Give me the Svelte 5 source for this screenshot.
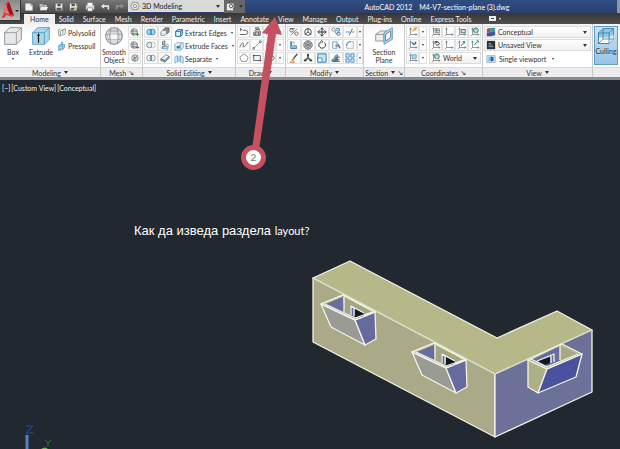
<script lang="ts">
	type Shape = { d: string; fill?: string; stroke?: string; w?: number };

	const dark = '#4c5358';
	const blue = '#2f80b5';
	const sky = '#a9d8f0';

	let workspace = $state('3D Modeling');
	let activeTab = $state('Home');
	let visualStyle = $state('Conceptual');
	let view = $state('Unsaved View');
	let ucs = $state('World');

	const tabs = [
		'Home', 'Solid', 'Surface', 'Mesh', 'Render', 'Parametric', 'Insert', 'Annotate',
		'View', 'Manage', 'Output', 'Plug-ins', 'Online', 'Express Tools'
	];

	const axes: Shape = { d: 'M3 2V9H10M3 9L1 11M2 3L3 1L4 3M9 8L11 9L9 10', stroke: dark };

	// every icon is drawn on a 12 x 12 grid
	const icons: Record<string, Shape[]> = {
		new: [{ d: 'M2 2H8L10 4V10H2Z', fill: '#f4f4f4', stroke: '#ddd' }, { d: 'M8 2V4H10', stroke: '#777' }],
		open: [{ d: 'M1 3H4L5 4H9V9H2Z', fill: '#aaa', stroke: '#ddd' }, { d: 'M3 6H11L9 10H1Z', fill: '#f0f0f0' }],
		save: [{ d: 'M2 2H10V10H2Z', fill: '#eee' }, { d: 'M4 2H8V5H4ZM3 7H9V10H3Z', fill: '#555' }],
		saveAs: [{ d: 'M1 2H9V10H1Z', fill: '#eee' }, { d: 'M3 2H7V5H3ZM2 7H7V10H2Z', fill: '#555' }, { d: 'M6 10L10 5', stroke: '#d8c56c', w: 2 }],
		print: [{ d: 'M3 1H9V5H3Z', fill: '#fff' }, { d: 'M1 4H11V9H1Z', fill: '#ddd' }, { d: 'M3 7H9V11H3Z', fill: '#fff', stroke: '#666' }],
		undo: [{ d: 'M5 2L1 5L5 8V6H9V9H11V4H5Z', fill: '#e3e3e3' }],
		redo: [{ d: 'M7 2L11 5L7 8V6H3V9H1V4H7Z', fill: '#8d8d8d' }],
		search: [{ d: 'M1 2H9V10H1Z', fill: '#eee' }, { d: 'M4 5A2 2 0 1 0 8 5A2 2 0 1 0 4 5M8 7L11 10', stroke: '#444', w: 1 }],
		gear: [{ d: 'M6 1L7 2L9 2L10 4L11 6L10 8L9 10L7 10L6 11L5 10L3 10L2 8L1 6L2 4L3 2L5 2Z', stroke: '#555', fill: '#eee' }, { d: 'M4 6A2 2 0 1 0 8 6A2 2 0 1 0 4 6', stroke: '#555' }],
		box: [{ d: 'M1 4L4 1H11V8L8 11H1Z', fill: '#e6e8ea', stroke: '#7a8085', w: 0.5 }, { d: 'M1 4H8V11M8 4L11 1', stroke: '#8b9095', w: 0.5 }],
		extrude: [{ d: 'M1 4L4 1H11V8L8 11H1Z', fill: '#a9d8ee', stroke: '#4a94b8', w: 0.5 }, { d: 'M1 4H8V11M8 4L11 1', stroke: '#4a94b8', w: 0.5 }, { d: 'M4.500 10V5M4 6L4.500 5L5 6', stroke: '#222', w: 0.8 }],
		polysolid: [{ d: 'M2 2V9L4 10V4L7 2V8L5 9M7 2L10 1V6L8 9M2 2L4 1', stroke: dark }],
		presspull: [{ d: 'M2 6L4 4H9V8L7 10H2Z', fill: sky, stroke: blue }, { d: 'M2 6H7V10M6 5V1M5 3L6 1L7 3', stroke: blue }, { d: 'M1 11H5', stroke: dark }],
		smooth: [{ d: 'M1 6A5 5 0 1 0 11 6A5 5 0 1 0 1 6', fill: '#dadde0', stroke: '#70767b', w: 0.5 }, { d: 'M1 5H11M2 8H10M4 1Q3 6 4 11M8 1Q9 6 8 11M3 3H9', stroke: '#8d9399', w: 0.5 }, { d: 'M4 5H8V8H4Z', fill: '#f4f5f7' }],
		meshMore: [{ d: 'M1 6A4 4 0 1 0 9 6A4 4 0 1 0 1 6', fill: '#e2e4e6', stroke: dark }, { d: 'M1 5H9M4 2Q3 6 4 10M2 8H8', stroke: dark }, { d: 'M7 9H11M9 7V11', stroke: '#3a9b35', w: 1.4 }],
		meshLess: [{ d: 'M1 6A4 4 0 1 0 9 6A4 4 0 1 0 1 6', fill: '#e2e4e6', stroke: dark }, { d: 'M1 5H9M4 2Q3 6 4 10M2 8H8', stroke: dark }, { d: 'M7 9H11', stroke: '#c43838', w: 1.8 }],
		refine: [{ d: 'M2 6A4 4 0 1 0 10 6A4 4 0 1 0 2 6', fill: '#e2e4e6', stroke: dark }, { d: 'M3 9L9 3M5 3V6H9M4 7H6V10', stroke: dark }],
		union: [{ d: 'M1 6A3 3.5 0 1 0 7 6A3 3.5 0 1 0 1 6M5 6A3 3.5 0 1 0 11 6A3 3.5 0 1 0 5 6', fill: sky, stroke: blue, w: 1 }],
		subtract: [{ d: 'M5 6A3 3.5 0 1 0 11 6A3 3.5 0 1 0 5 6', stroke: '#92999e' }, { d: 'M1 6A3 3.5 0 1 0 7 6A3 3.5 0 1 0 1 6', fill: '#d8edf7', stroke: dark }],
		intersect: [{ d: 'M1 6A3 3.5 0 1 0 7 6A3 3.5 0 1 0 1 6M5 6A3 3.5 0 1 0 11 6A3 3.5 0 1 0 5 6', stroke: dark }, { d: 'M6 3Q4 6 6 9Q8 6 6 3Z', fill: sky, stroke: blue }],
		interfere: [{ d: 'M4 3L6 1H11V6L9 8H4Z', fill: '#858c91', stroke: dark }, { d: 'M1 6L3 4H8V8L6 10H1Z', fill: '#e9ebec', stroke: dark }],
		slice: [{ d: 'M3 2L6 1V5L3 6Z', fill: '#bbb', stroke: dark }, { d: 'M2 10L4 7L10 8L9 11Z', fill: sky, stroke: blue }, { d: 'M2 9L9 5L11 7', stroke: dark }],
		thicken: [{ d: 'M1 7L7 2L11 4L6 9Z', fill: '#f2f2f2', stroke: dark }, { d: 'M1 7V9L6 11L11 6V4L6 9Z', fill: '#7db3d2', stroke: dark }],
		edges: [{ d: 'M2 4L4 2H10V8L8 10H2Z', fill: '#e7f4fb', stroke: '#1d6da3', w: 1.2 }, { d: 'M2 4H8V10M8 4L10 2', stroke: '#1d6da3', w: 1.2 }],
		faces: [{ d: 'M1 4L4 2H11V8L8 11H1Z', fill: '#edf5f9', stroke: '#38769c' }, { d: 'M3 6H7V9H3Z', fill: '#2e80ad' }, { d: 'M8 4V10M5 7L9 3', stroke: '#38769c' }],
		separate: [{ d: 'M1 4L4 2V9L1 11ZM11 4L8 2V9L11 11ZM5 2V10M7 2V10', fill: '#e4f3fa', stroke: blue }],
		pline: [{ d: 'M1 9H8A2.5 2.5 0 0 0 8 4H5M2 3H4M2 1V5', stroke: dark, w: 1 }],
		loft: [{ d: 'M3 5L5 3H8L10 5V10H2V6M4 10V6H8V10M5 3L4 1H8L9 3', fill: '#c9ccce', stroke: dark, w: 1 }],
		arc: [{ d: 'M2 10Q2 2 10 2', stroke: dark }],
		spline: [{ d: 'M1 9C4 0 6 4 5 7S8 8 11 2', stroke: dark, w: 1 }],
		line: [{ d: 'M2 10L10 2M1 9H3V11H1ZM9 1H11V3H9Z', stroke: dark }],
		circle: [{ d: 'M2 6A4 4 0 1 0 10 6A4 4 0 1 0 2 6', stroke: dark, w: 1 }],
		polygon: [{ d: 'M6 1L11 5L9 10H3L1 5Z', stroke: dark }],
		rect: [{ d: 'M2 3H10V9H2Z', fill: '#f5f5f5', stroke: dark, w: 1 }, { d: 'M1 2H3V4H1ZM9 8H11V10H9Z', fill: dark }],
		ellipse: [{ d: 'M1 6A5 3 0 1 0 11 6A5 3 0 1 0 1 6', stroke: dark, w: 1 }],
		mirror: [{ d: 'M2 10L10 2', stroke: blue, w: 1 }, { d: 'M1 4A2 2 0 1 0 5 4A2 2 0 1 0 1 4M7 8A2 2 0 1 0 11 8A2 2 0 1 0 7 8M1 2H7', stroke: dark, w: 1 }],
		align: [{ d: 'M3 2V7H9Q10 10 8 10H2V2Z', fill: sky, stroke: blue, w: 1 }, { d: 'M4 2L6 3V5M2 10H10', stroke: dark }],
		erase: [{ d: 'M5 7L10 1', stroke: '#4b3c32', w: 1.6 }, { d: 'M2 9L5 6L7 8L5 10Z', fill: '#e0a13c' }, { d: 'M1 11H7', stroke: '#b33c2d', w: 1 }],
		gizmo: [{ d: 'M2 6A4 4 0 1 0 10 6A4 4 0 1 0 2 6M6 6V1M6 6L2 9M6 6L10 9', stroke: '#34393d', w: 1 }],
		gizmoRotate: [{ d: 'M1 6A5 5 0 1 0 11 6A5 5 0 1 0 1 6', stroke: dark, w: 1, fill: '#ddd' }, { d: 'M3 6A3 3 0 1 0 9 6A3 3 0 1 0 3 6M6 1V11M2 4L10 8M10 4L2 8', stroke: dark }],
		gizmoScale: [{ d: 'M6 6V2', stroke: '#2e70b5', w: 2 }, { d: 'M6 6L2 9', stroke: '#b54336', w: 2 }, { d: 'M6 6L10 9', stroke: '#3b8b42', w: 2 }, { d: 'M5 1H7V4H5ZM1 8H4V10H1ZM8 8H11V10H8Z', fill: '#333' }],
		move: [{ d: 'M6 1V11M1 6H11M4 3L6 1L8 3M4 9L6 11L8 9M3 4L1 6L3 8M9 4L11 6L9 8', stroke: '#2e3438', w: 1.2 }],
		rotate: [{ d: 'M9 3A4 4 0 1 1 5 2M5 0L7 2L5 4', stroke: '#34393d', w: 1.2 }],
		scale: [{ d: 'M1 1H11V11H1Z', fill: '#c5e4f4', stroke: '#3183b8', w: 1.2 }, { d: 'M1 6H6V11H1Z', fill: '#fff', stroke: '#3183b8', w: 1 }],
		copy: [{ d: 'M1 3A2 2 0 1 0 5 3A2 2 0 1 0 1 3M5 6A2 2 0 1 0 9 6A2 2 0 1 0 5 6', stroke: dark }, { d: 'M7 8A2 2 0 1 0 11 8A2 2 0 1 0 7 8M6 2H10V5', stroke: blue, w: 1.2 }],
		stretch: [{ d: 'M2 2H7V10H2Z', fill: '#edf6fb', stroke: blue }, { d: 'M5 7H10V10M8 4L11 10', stroke: dark, w: 1 }],
		offset: [{ d: 'M1 10V8Q4 8 4 5Q5 2 8 2V10Z', fill: '#70a9cb', stroke: dark }, { d: 'M5 10V7Q7 7 7 5H11M6 8H10M2 10H11', stroke: dark, w: 1 }],
		trim: [{ d: 'M1 6H6M8 6H11', stroke: blue, w: 1 }, { d: 'M5 10L9 2', stroke: dark, w: 1 }],
		fillet: [{ d: 'M2 10V6Q2 2 7 2H10V10Z', fill: '#fafafa', stroke: '#8b9196' }, { d: 'M2 7Q2 2 7 2', stroke: blue, w: 1 }],
		array: [{ d: 'M1 1H5V5H1ZM7 1H11V5H7ZM1 7H5V11H1ZM7 7H11V11H7Z', fill: '#d4eaf6', stroke: '#3688b9', w: 1 }],
		section: [{ d: 'M1 5L4 3H9L6 5V9H1Z', fill: '#ececec', stroke: '#888', w: 0.5 }, { d: 'M1 5H6', stroke: '#888', w: 0.5 }, { d: 'M6 4L11 1V8L6 11Z', fill: '#b7d9ec', stroke: '#4a94bd', w: 0.5 }, { d: 'M7 5L10 3V7L7 9Z', fill: '#fff', stroke: '#667', w: 0.5 }],
		ucsNew: [axes, { d: 'M5 5L9 2M7 2L10 1L9 4', stroke: '#e2a52d', w: 1.4 }],
		ucsGrid: [axes, { d: 'M5 2H10V7H5ZM5 4H10M7 2V7', fill: '#eee', stroke: dark }],
		ucs: [axes],
		ucsView: [axes, { d: 'M5 3H10V7H5Z', fill: '#ddd', stroke: dark, w: 1 }],
		ucsGlobe: [axes, { d: 'M4 4A3 3 0 1 0 10 4A3 3 0 1 0 4 4', fill: '#8fc7bd', stroke: '#33806b', w: 1 }, { d: 'M5 3L7 5L9 3M7 5V7', stroke: '#fff' }],
		ucsX: [axes, { d: 'M5 3L8 6M9 2V5', stroke: '#2b6292', w: 1.6 }],
		ucsBack: [axes, { d: 'M6 6Q10 7 10 4Q9 1 6 3M5 5V2H8', stroke: '#222', w: 1 }],
		ucsZ: [axes, { d: 'M5 7L9 2M7 2H9V4', stroke: '#2869a8', w: 1.2 }],
		ucsPoints: [axes, { d: 'M5 6L9 2M8 1H10V3', stroke: '#29816e', w: 1.2 }],
		ucsFace: [axes, { d: 'M5 2H10V6L8 7H5Z', fill: sky, stroke: blue }],
		conceptual: [{ d: 'M1 2L5 1V6L1 7Z', fill: '#bd4750' }, { d: 'M5 1H11V6H5Z', fill: '#369b9c' }, { d: 'M1 7L6 6V11H1Z', fill: '#3f5091' }, { d: 'M6 6H11V10L6 11Z', fill: '#335fae' }],
		unsaved: [{ d: 'M1 1H11V11H1Z', fill: '#263038' }, { d: 'M3 4H6M3 6H8M3 8H9', stroke: '#dfe6e9' }],
		viewport: [{ d: 'M1 2H11V10H1Z', fill: '#d9eaf6', stroke: '#6d8ba2' }, { d: 'M3 4L6 3V8L3 9Z', fill: '#6bb4df' }, { d: 'M6 3L9 4V8L6 9Z', fill: '#1e61a0' }],
		culling: [{ d: 'M1 4L4 1H11V8L8 11H1Z', fill: '#8fc6e8', stroke: '#397596', w: 0.5 }, { d: 'M1 7H8V11H1Z', fill: '#fff' }, { d: 'M8 7L11 5V8L8 11Z', fill: '#e2eef6' }, { d: 'M1 4H8V11M8 4L11 1M1 4V11H8M4 1V8L1 11M4 8H11', stroke: '#397596', w: 0.5 }]
	};

	const quickTools = ['new', 'open', 'save', 'saveAs', 'print', 'undo', 'redo'];
	const meshTools = ['meshMore', 'meshLess', 'refine'];
	const solidTools = ['union', 'interfere', 'subtract', 'slice', 'intersect', 'thicken'];
	const solidActions = [
		{ icon: 'edges', label: 'Extract Edges' },
		{ icon: 'faces', label: 'Extrude Faces' },
		{ icon: 'separate', label: 'Separate' }
	];
	const drawTools = ['pline', 'loft', 'arc', 'spline', 'line', 'circle', 'polygon', 'rect', 'ellipse'];
	const modifyTools = [
		'mirror', 'gizmo', 'move', 'copy', 'trim',
		'align', 'gizmoRotate', 'rotate', 'stretch', 'fillet',
		'erase', 'gizmoScale', 'scale', 'offset', 'array'
	];
	const ucsTools = ['ucsGrid', 'ucs', 'ucsView', 'ucsGlobe', 'ucsBack', 'ucs', 'ucsZ', 'ucsPoints'];
</script>

{#snippet icon(name: string)}
	<svg class="icon" viewBox="0 0 12 12" aria-hidden="true">
		{#each icons[name] as s}
			<path d={s.d} fill={s.fill ?? 'none'} stroke={s.stroke ?? 'none'} stroke-width={s.w ?? 0.7} />
		{/each}
	</svg>
{/snippet}

{#snippet tool(name: string)}
	<button class="tool" aria-label={name}>{@render icon(name)}</button>
{/snippet}

{#snippet more()}
	<button class="more" aria-label="More"><i class="caret tiny"></i></button>
{/snippet}

{#snippet balcony()}
	<path d="M321 304L355 320L365 345L331 327Z" fill="#9a9b94" />
	<path d="M355 320L375 312L376 339L365 345Z" fill="#666b9e" />
	<path d="M321 304L343 295L375 312L355 320Z" fill="#b7b98a" />
	<path d="M326 304L343 297L345 314Z" fill="#686da0" stroke="none" />
	<path d="M344 297L372 312L355 318L345 313Z" fill="#a5a485" stroke="none" />
	<path d="M350 306L364 313L363 317L355 318L350 315Z" fill="#666b9e" stroke="none" />
	<path d="M355 309L364 313V315L355 318Z" fill="#111a22" stroke="none" />
	<path d="M351 315V306L364 313M354 316V308M321 304L343 295L375 312L355 320ZM325 304L355 318L372 312M344 297V313" />
{/snippet}

<div class="app">
	<header>
		<button class="logo" aria-label="Application menu">
			<svg viewBox="0 0 20 21" aria-hidden="true">
				<path d="M2 18L6 3L9 2L14 16L10 15L8 11L6 12L5 17Z" fill="#cf2831" />
				<path d="M6 3L8 11L5 13L2 18Z" fill="#f06a68" />
				<path d="M9 2L14 16L10 15L7 7Z" fill="#a5101c" />
				<path d="M1 18L6 13L14 15L12 17L7 15Z" fill="#df3b40" />
				<path d="M15 10H19L17 12Z" fill="#222" />
			</svg>
		</button>
		<div class="bars">
			<div class="titlebar">
				<div class="quick">
					{#each quickTools as name}
						<button aria-label={name}>{@render icon(name)}</button>
					{/each}
				</div>
				<label class="workspace dropdown">
					{@render icon('gear')}
					<select bind:value={workspace} aria-label="Workspace">
						<option>3D Modeling</option>
					</select>
					<i class="caret"></i>
				</label>
				<button class="find" aria-label="Search">{@render icon('search')}<i class="caret"></i></button>
				<div class="title"><span>AutoCAD 2012</span><span>M4-V7-section-plane (3).dwg</span></div>
			</div>
			<nav>
				{#each tabs as tab}
					<button class:active={activeTab === tab} onclick={() => (activeTab = tab)}>{tab}</button>
				{/each}
				<button class="minimize" aria-label="Minimize ribbon"><i></i><b class="caret tiny"></b></button>
			</nav>
		</div>
	</header>

	<div class="ribbon">
		<section>
			<div class="body modeling">
				<button class="large">{@render icon('box')}Box<i class="caret tiny"></i></button>
				<button class="large">{@render icon('extrude')}Extrude<i class="caret tiny"></i></button>
				<div class="rows">
					<button class="action">{@render icon('polysolid')}Polysolid</button>
					<button class="action">{@render icon('presspull')}Presspull</button>
				</div>
			</div>
			<h2>Modeling <i class="caret"></i></h2>
		</section>

		<section>
			<div class="body">
				<button class="large">{@render icon('smooth')}Smooth Object</button>
				<div class="tools one">
					{#each meshTools as name}{@render tool(name)}{/each}
				</div>
			</div>
			<h2>Mesh <span class="launcher">↘</span></h2>
		</section>

		<section>
			<div class="body">
				<div class="tools two">
					{#each solidTools as name}{@render tool(name)}{/each}
				</div>
				<div class="rows">
					{#each solidActions as a}
						<button class="action">{@render icon(a.icon)}{a.label}<i class="caret tiny"></i></button>
					{/each}
				</div>
			</div>
			<h2>Solid Editing <i class="caret"></i></h2>
		</section>

		<section>
			<div class="body">
				<div class="tools draw">
					{#each drawTools as name, i}
						{@render tool(name)}
						{#if i % 3 === 2}{@render more()}{/if}
					{/each}
				</div>
			</div>
			<h2>Draw <i class="caret"></i></h2>
		</section>

		<section>
			<div class="body">
				<div class="tools modify">
					{#each modifyTools as name, i}
						{@render tool(name)}
						{#if i % 5 === 4}{@render more()}{/if}
					{/each}
				</div>
			</div>
			<h2>Modify <i class="caret"></i></h2>
		</section>

		<section>
			<div class="body center">
				<button class="large">{@render icon('section')}Section Plane</button>
			</div>
			<h2>Section <i class="caret"></i><span class="launcher">↘</span></h2>
		</section>

		<section>
			<div class="body">
				<div class="tools split">
					{#each ['ucsNew', 'ucsX', 'ucsFace'] as name}
						{@render tool(name)}
						{@render more()}
					{/each}
				</div>
				<div class="coords">
					<div class="tools four">
						{#each ucsTools as name}{@render tool(name)}{/each}
					</div>
					<label class="dropdown">
						{@render icon('ucsGlobe')}
						<select bind:value={ucs} aria-label="Coordinate system"><option>World</option></select>
						<i class="caret"></i>
					</label>
				</div>
			</div>
			<h2>Coordinates <span class="launcher">↘</span></h2>
		</section>

		<section>
			<div class="body views">
				<label class="dropdown">
					{@render icon('conceptual')}
					<select bind:value={visualStyle} aria-label="Visual style"><option>Conceptual</option></select>
					<i class="caret"></i>
				</label>
				<label class="dropdown">
					{@render icon('unsaved')}
					<select bind:value={view} aria-label="Saved view"><option>Unsaved View</option></select>
					<i class="caret"></i>
				</label>
				<button class="action">{@render icon('viewport')}Single viewport<i class="caret tiny"></i></button>
			</div>
			<h2>View <i class="caret"></i></h2>
		</section>

		<section>
			<div class="body">
				<button class="large culling">{@render icon('culling')}Culling</button>
			</div>
			<h2></h2>
		</section>
	</div>

	<main>
		<div class="controls">
			<button>[−]</button><button>[Custom View]</button><button>[Conceptual]</button>
		</div>
		<svg class="model" viewBox="0 80 620 369" role="img" aria-label="3D model">
			<g stroke="#f3f4e8" stroke-width="1.300" stroke-linejoin="round" fill="none">
				<path d="M313 278L350 261L497 338L557 311L592 330L495 374Z" fill="#b6b88a" />
				<path d="M313 278L495 374V437L313 342Z" fill="#aaa988" />
				<path d="M495 374L592 330V392L495 437Z" fill="#6c719a" />
				<path d="M313 278L495 374L592 330" stroke="#d3d4bd" stroke-width="1" />
				{@render balcony()}
				<g transform="translate(91 48)">{@render balcony()}</g>
				<path d="M528 360L547 369L538 393L528 387Z" fill="#adb087" />
				<path d="M547 369L582 354L576 377L538 393Z" fill="#4a519f" />
				<path d="M528 360L562 344L582 354L547 369Z" fill="#b7b98a" />
				<path d="M531 360L560 346V361L547 366Z" fill="#686da0" stroke="none" />
				<path d="M560 346L578 354L560 361Z" fill="#a8a886" stroke="none" />
				<path d="M538 361L550 357V363L545 365Z" fill="#111a22" stroke="none" />
				<path d="M537 361L554 354V362M551 356V363M531 359L547 367L578 354M560 345V360" />
			</g>
			<path d="M27 449V435" stroke="#5581bd" stroke-width="3" />
			<path d="M26 426H33L26 433H34" stroke="#274d9c" fill="none" />
			<path d="M45 440L48 443L51 440M48 443V447" stroke="#237b36" fill="none" />
			<path d="M41 449Q45 446 48 449Z" fill="#62b84d" />
		</svg>
		<p class="question">Как да изведа раздела <span>layout?</span></p>
	</main>

	<!-- callout arrow lies over the ribbon and the drawing area -->
	<svg class="callout" viewBox="0 0 30 160" aria-hidden="true">
		<path d="M24 17L31 35L25 34L8 150L1 149L17 34L11 33Z" fill="#c5505f" />
	</svg>
	<div class="step">2</div>
</div>

<style>
	:global(body) {
		margin: 0;
		background: #212830;
	}

	.app {
		position: relative;
		display: flex;
		flex-direction: column;
		min-height: 100vh;
		overflow: hidden;
		font-family: Lato, 'Open Sans', sans-serif;
		font-size: 7px;
		line-height: 8px;
		color: #333;
	}

	button,
	select {
		margin: 0;
		padding: 0;
		border: none;
		background: none;
		font: inherit;
		color: inherit;
	}

	select {
		flex: 1;
		min-width: 0;
		appearance: none;
		outline: none;
	}

	.icon {
		flex: none;
		width: 10px;
		height: 10px;
	}

	.caret {
		flex: none;
		display: inline-block;
		border: 2px solid transparent;
		border-top: 3px solid #333;
		border-bottom: none;
	}

	.caret.tiny {
		border-width: 1px;
		border-top-width: 2px;
	}

	header {
		display: flex;
		height: 24px;
		background: #464646;
	}

	.logo {
		width: 21px;
		height: 21px;
		background: linear-gradient(#8a8a8a, #bababa);
		border-right: 1px solid #333;
		border-bottom: 1px solid #333;
	}

	.logo svg {
		display: block;
		width: 20px;
		height: 21px;
	}

	.bars {
		flex: 1;
		min-width: 0;
	}

	.titlebar {
		display: flex;
		height: 13px;
		background: linear-gradient(#304d82, #2b406f);
	}

	.quick {
		display: flex;
		align-items: center;
		justify-content: space-around;
		width: 107px;
		background: linear-gradient(#777, #4b4b4b);
	}

	.quick button,
	.find {
		display: flex;
		align-items: center;
	}

	.dropdown {
		display: flex;
		align-items: center;
		gap: 2px;
		padding: 0 3px 0 1px;
		box-sizing: border-box;
		height: 12px;
		border: 1px solid #dcdcdc;
		background: linear-gradient(#fff, #f1f1f1);
	}

	.dropdown.workspace {
		width: 96px;
		background: #d9d9d9;
		color: #222;
	}

	.find {
		gap: 3px;
		padding: 0 2px;
		background: #666;
	}

	.title {
		flex: 1;
		display: flex;
		align-items: center;
		justify-content: center;
		gap: 7px;
		padding-left: 12px;
		color: #fff;
		border-right: 3px solid #9298a2;
	}

	nav {
		display: flex;
		height: 11px;
		padding-left: 3px;
		background: linear-gradient(#363636, #505050);
	}

	nav button {
		padding: 0 5px 0 4px;
		color: #eee;
		white-space: nowrap;
	}

	nav button.active {
		padding: 0 6px;
		margin-top: 1px;
		background: #eee;
		color: #333;
	}

	.minimize {
		display: flex;
		align-items: center;
		gap: 3px;
		margin-left: 8px;
	}

	.minimize i {
		width: 3px;
		height: 1px;
		border: 2px solid #eee;
		background: #444;
	}

	.minimize .caret {
		border-top-color: #eee;
	}

	.ribbon {
		display: grid;
		grid-template-columns: 101fr 42fr 93fr 50fr 78fr 41fr 78fr 110fr 27fr;
		height: 53px;
		border-bottom: 3px solid #888d92;
		background: #fff;
	}

	section {
		display: flex;
		flex-direction: column;
		min-width: 0;
		border-right: 1px solid #c9c9c9;
	}

	section:last-child {
		border-right: none;
	}

	.body {
		flex: 1;
		display: flex;
		gap: 2px;
		padding: 2px 1px 0;
		background: linear-gradient(#f3f3f3, #fff 12px);
	}

	.body.center {
		justify-content: center;
	}

	h2 {
		display: flex;
		align-items: center;
		justify-content: center;
		gap: 3px;
		margin: 0;
		height: 10px;
		font-size: 7px;
		font-weight: 400;
		background: #ececee;
		border-top: 1px solid #dadada;
		box-sizing: border-box;
	}

	.launcher {
		font-size: 6px;
	}

	.large {
		display: flex;
		flex-direction: column;
		align-items: center;
		width: 24px;
	}

	.large .icon {
		width: 20px;
		height: 20px;
		margin-bottom: 2px;
	}

	.large .caret {
		margin-top: 2px;
	}

	.modeling {
		gap: 4px;
	}

	.rows {
		display: flex;
		flex-direction: column;
	}

	.action {
		display: flex;
		align-items: center;
		gap: 1px;
		height: 13px;
		white-space: nowrap;
	}

	.action .caret {
		margin-left: 3px;
	}

	.tools {
		display: grid;
		grid-auto-rows: 13px;
		grid-template-columns: 13px;
		align-content: start;
	}

	.two {
		grid-template-columns: 14px 14px;
	}

	.draw {
		grid-template-columns: 13px 13px 13px 8px;
	}

	.modify {
		grid-template-columns: repeat(5, 14px) 6px;
	}

	.split {
		grid-template-columns: 13px 8px;
	}

	.four {
		grid-template-columns: repeat(4, 1fr);
	}

	.tool,
	.more {
		display: flex;
		align-items: center;
		justify-content: center;
		height: 12px;
		border: 1px solid #e1e1e1;
		box-sizing: border-box;
		background: #fbfbfb;
	}

	.coords {
		flex: 1;
	}

	.views {
		flex-direction: column;
		gap: 1px;
	}

	.views .action {
		gap: 3px;
		padding-left: 2px;
	}

	.culling {
		height: 39px;
		border: 1px solid #5f9cc9;
		background: linear-gradient(#c9e3f6, #94c4e8);
	}

	.culling .icon {
		width: 18px;
		height: 18px;
	}

	main {
		flex: 1;
		position: relative;
		background: #212830;
	}

	.controls {
		position: absolute;
		top: 4px;
		left: 2px;
		display: flex;
		gap: 1px;
		color: #f2f2f2;
	}

	.model {
		display: block;
		width: 100%;
	}

	.question {
		position: absolute;
		top: 142px;
		left: 134px;
		margin: 0;
		font-family: 'Liberation Sans', sans-serif;
		font-size: 13px;
		line-height: 18px;
		color: #fff;
	}

	.question span {
		font-family: Lato, sans-serif;
		font-size: 11px;
	}

	.callout {
		position: absolute;
		top: 0;
		left: 251px;
		width: 30px;
		height: 160px;
		overflow: visible;
		pointer-events: none;
	}

	.step {
		position: absolute;
		top: 145px;
		left: 241px;
		width: 15px;
		height: 15px;
		border: 5px solid #c5505f;
		border-radius: 50%;
		background: #fff;
		font-family: Lato, sans-serif;
		font-size: 10px;
		line-height: 15px;
		text-align: center;
		color: #777;
	}
</style>
